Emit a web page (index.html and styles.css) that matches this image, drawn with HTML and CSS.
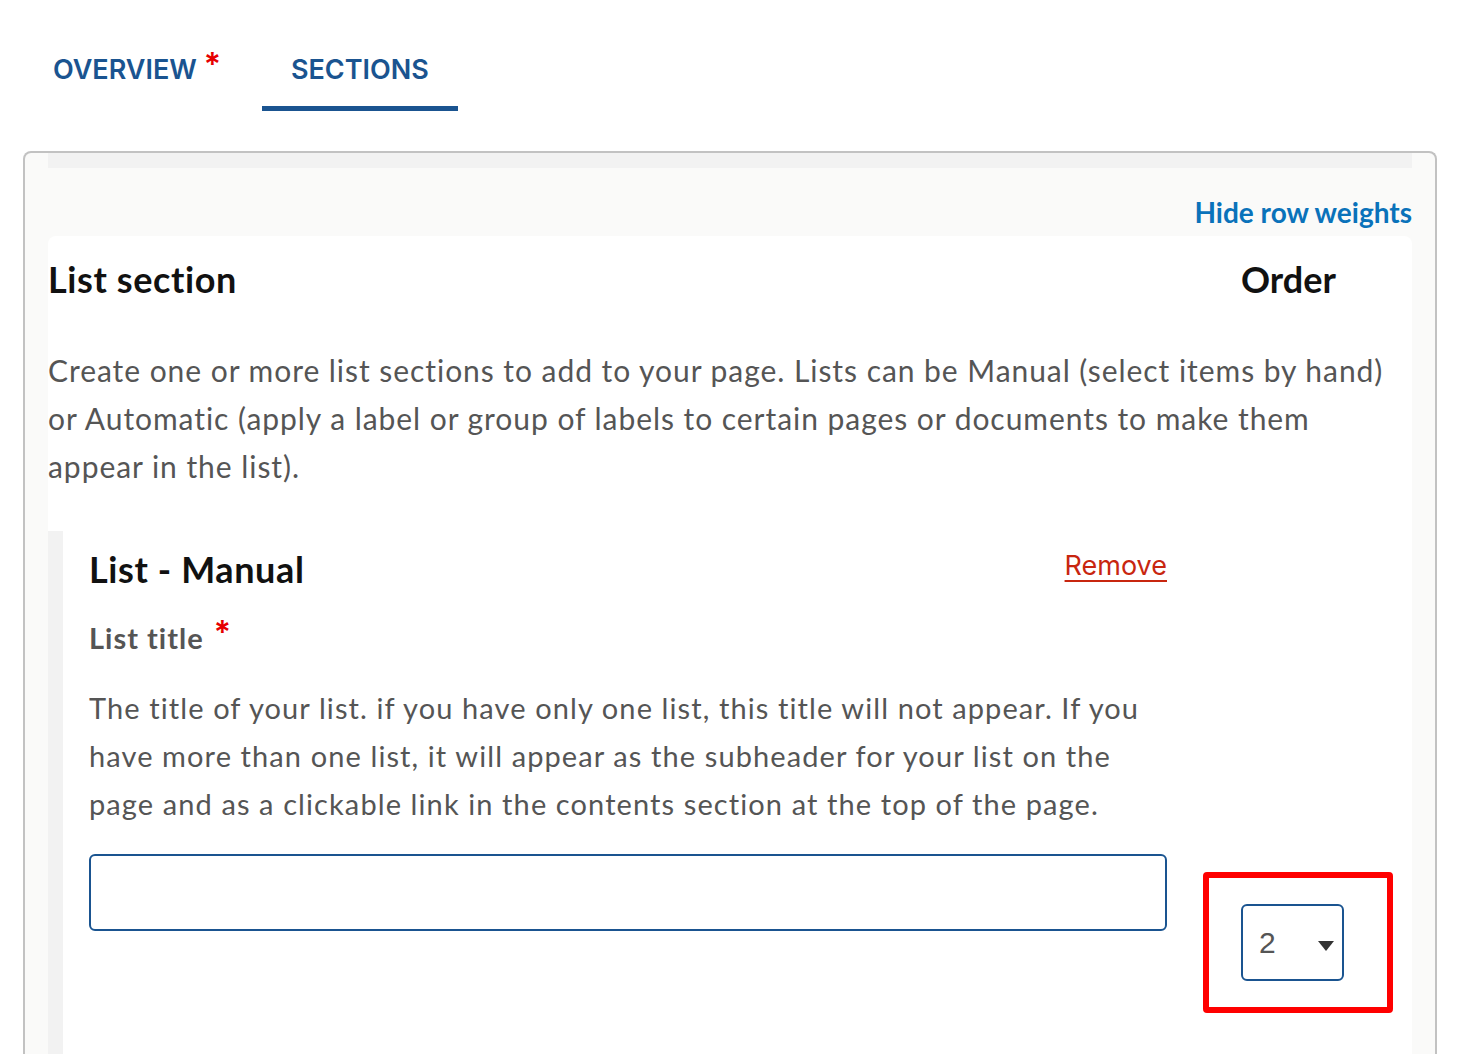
FILE: index.html
```html
<!DOCTYPE html>
<html lang="en">
<head>
    <meta charset="UTF-8">
    <meta name="viewport" content="width=device-width, initial-scale=1.0">
    <title>Sections</title>
    <link rel="stylesheet" href="styles.css">
</head>
<body>

<nav class="tabs">
    <a class="tab" href="#">OVERVIEW <span class="req">*</span></a>
    <a class="tab active" href="#">SECTIONS</a>
</nav>

<div class="box">
    <div class="box-bar"></div>
    <div class="weights-row">
        <a class="weights-link" href="#">Hide row weights</a>
    </div>

    <div class="panel">
        <div class="panel-head">
            <h2 class="panel-title">List section</h2>
            <h2 class="order-title">Order</h2>
        </div>
        <p class="panel-desc">Create one or more list sections to add to your page. Lists can be Manual (select items by hand) or Automatic (apply a label or group of labels to certain pages or documents to make them appear in the list).</p>

        <div class="row">
            <div class="item">
                <div class="item-head">
                    <h3 class="item-title">List - Manual</h3>
                    <a class="remove" href="#">Remove</a>
                </div>
                <label class="field-label" for="list-title">List title <span class="req">*</span></label>
                <p class="field-help">The title of your list. if you have only one list, this title will not appear. If you have more than one list, it will appear as the subheader for your list on the page and as a clickable link in the contents section at the top of the page.</p>
                <input class="field-input" id="list-title" type="text">
            </div>
            <div class="order-cell">
                <div class="highlight">
                    <div class="order-select">
                        <span>2</span>
                        <svg width="16" height="10" viewBox="0 0 16 10"><path d="M0 0 L16 0 L8 10 Z" fill="#333"/></svg>
                    </div>
                </div>
            </div>
        </div>
    </div>
</div>

</body>
</html>
```

FILE: styles.css
```css
body {
    margin: 0;
    padding: 0;
    background-color: #fff;
    font-family: Lato, "Open Sans", sans-serif;
    color: #555;
}
.tabs {
    display: flex;
    gap: 12px;
    padding: 50px 0 0 24px;
}
.tab {
    display: block;
    padding: 0 29px 16px;
    font-family: Inter, sans-serif;
    font-size: 27px;
    font-weight: 600;
    line-height: 40px;
    color: #1a5490;
    text-decoration: none;
    border-bottom: 5px solid transparent;
}
.tab.active {
    border-bottom-color: #1a5490;
}
.req {
    font-family: Inter, sans-serif;
    color: #e60000;
    vertical-align: top;
    font-size: 32px;
    font-weight: 600;
    line-height: 30px;
}
.box {
    margin: 40px 41px 0 23px;
    border: 2px solid #c2c2c2;
    border-bottom: none;
    border-radius: 8px 8px 0 0;
    background-color: #fafaf9;
    padding: 0 23px;
    min-height: 900px;
}
.box-bar {
    height: 15px;
    background-color: #f2f2f2;
}
.weights-row {
    display: flex;
    justify-content: flex-end;
    padding: 26px 0 6px;
}
.weights-link {
    font-size: 28px;
    font-weight: 700;
    line-height: 36px;
    color: #0a72ba;
    text-decoration: none;
}
.panel {
    background-color: #fff;
    border-radius: 8px 8px 0 0;
    padding-top: 23px;
    min-height: 800px;
}
.panel-head {
    display: grid;
    grid-template-columns: 1155px 1fr;
}
.panel-title,
.order-title {
    margin: 0;
    font-size: 36px;
    font-weight: 700;
    line-height: 40px;
    letter-spacing: 0.6px;
    color: #111;
}
.order-title {
    padding-left: 38px;
    letter-spacing: 0;
}
.panel-desc {
    margin: 47px 0 0;
    font-size: 30px;
    line-height: 48px;
    letter-spacing: 0.95px;
}
.row {
    display: grid;
    grid-template-columns: 1155px 190px;
    margin-top: 41px;
}
.item {
    border-left: 15px solid #f2f2f2;
    padding: 16px 36px 140px 26px;
}
.item-head {
    display: flex;
    justify-content: space-between;
    align-items: flex-start;
}
.item-title {
    margin: 0;
    font-size: 36px;
    font-weight: 700;
    line-height: 44px;
    letter-spacing: 0.6px;
    color: #111;
}
.remove {
    font-family: Inter, sans-serif;
    font-size: 27px;
    line-height: 38px;
    color: #c8260f;
    text-underline-offset: 5px;
    text-decoration-thickness: 2px;
}
.field-label {
    display: block;
    margin-top: 27px;
    font-size: 29px;
    font-weight: 700;
    line-height: 40px;
    letter-spacing: 1px;
    color: #555;
}
.field-label .req {
    margin-left: 2px;
}
.field-help {
    margin: 26px 0 0;
    font-size: 29px;
    line-height: 48px;
    letter-spacing: 1.1px;
}
.field-input {
    display: block;
    box-sizing: border-box;
    width: 100%;
    height: 77px;
    margin-top: 26px;
    border: 2px solid #1a5490;
    border-radius: 6px;
    background-color: #fff;
    font-size: 28px;
    padding: 0 16px;
}
.order-cell {
    padding-top: 341px;
}
.highlight {
    border: 6px solid #ff0000;
    border-radius: 4px;
    padding: 26px 44px 26px 32px;
}
.order-select {
    box-sizing: border-box;
    height: 77px;
    width: 103px;
    border: 2px solid #1a5490;
    border-radius: 6px;
    display: flex;
    align-items: center;
    justify-content: space-between;
    padding: 0 8px 0 16px;
    font-family: "Liberation Sans", sans-serif;
    font-size: 30px;
    color: #555;
}
.order-select svg {
    margin-top: 6px;
}
```
